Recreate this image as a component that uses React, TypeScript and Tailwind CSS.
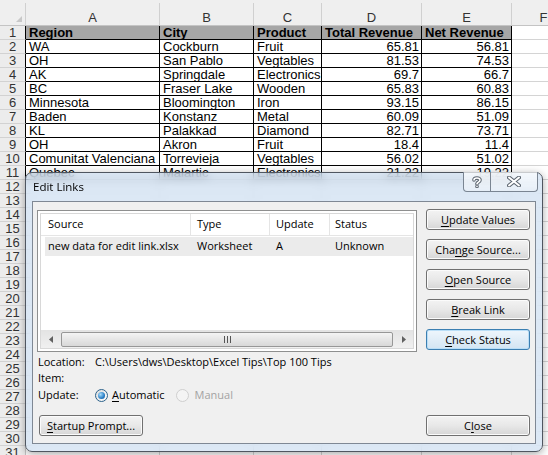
import React from 'react';

const cols = [
  { k: 'A', w: 'w-[134px]' },
  { k: 'B', w: 'w-[94px]' },
  { k: 'C', w: 'w-[68px]' },
  { k: 'D', w: 'w-[100px]' },
  { k: 'E', w: 'w-[90px]' },
  { k: 'F', w: 'w-[64px]' },
];

const data = [
  ['Region', 'City', 'Product', 'Total Revenue', 'Net Revenue'],
  ['WA', 'Cockburn', 'Fruit', '65.81', '56.81'],
  ['OH', 'San Pablo', 'Vegtables', '81.53', '74.53'],
  ['AK', 'Springdale', 'Electronics', '69.7', '66.7'],
  ['BC', 'Fraser Lake', 'Wooden', '65.83', '60.83'],
  ['Minnesota', 'Bloomington', 'Iron', '93.15', '86.15'],
  ['Baden', 'Konstanz', 'Metal', '60.09', '51.09'],
  ['KL', 'Palakkad', 'Diamond', '82.71', '73.71'],
  ['OH', 'Akron', 'Fruit', '18.4', '11.4'],
  ['Comunitat Valenciana', 'Torrevieja', 'Vegtables', '56.02', '51.02'],
  ['Quebec', 'Malartic', 'Electronics', '21.22', '19.22'],
];

function Sheet() {
  const rows = Array.from({ length: 31 }, (_, i) => i + 1);
  return (
    <div className="flex flex-col font-['Liberation_Sans',Arial,sans-serif] text-[13px] text-black">
      {/* Column headers */}
      <div className="flex h-[26px] border-b border-[#c4c4c4] bg-[#efefef] pt-[3px]">
        <div className="relative w-[26px] shrink-0 border-r border-[#d0d0d0]">
          <svg className="absolute bottom-[3px] right-[3px]" width="6" height="6" viewBox="0 0 6 6">
            <path d="M6 0 L6 6 L0 6 Z" fill="#c8c8c8" />
          </svg>
        </div>
        {cols.map((c) => (
          <div
            key={c.k}
            className={`${c.w} flex shrink-0 items-end justify-center border-r border-[#d0d0d0] leading-[14px] text-[#333]`}
          >
            {c.k}
          </div>
        ))}
      </div>
      {/* Rows */}
      {rows.map((r) => {
        const row = data[r - 1];
        return (
          <div key={r} className="flex h-[14px] leading-[13px]">
            <div
              className={`w-[26px] shrink-0 border-b border-[#d2d2d2] bg-[#ececec] text-center text-[#333] ${
                row ? 'border-r border-r-black' : 'border-r border-r-[#c4c4c4]'
              }`}
            >
              {r}
            </div>
            {cols.map((c, ci) => {
              const v = row && ci < 5 ? row[ci] : '';
              const inData = row && ci < 5;
              return (
                <div
                  key={c.k}
                  className={`${c.w} shrink-0 overflow-hidden whitespace-nowrap border-b border-r ${
                    inData ? 'border-black' : 'border-[#d4d4d4]'
                  } ${r === 1 && inData ? 'bg-[#a6a6a6] font-bold' : ''} ${
                    ci >= 3 && r > 1 ? 'pr-[2px] text-right' : 'pl-[3px]'
                  } ${ci >= 3 && r === 1 ? 'pl-[2px]' : ''}`}
                >
                  {v}
                </div>
              );
            })}
          </div>
        );
      })}
    </div>
  );
}

function WinButton({
  children,
  isDefault,
}: {
  children: React.ReactNode;
  isDefault?: boolean;
}) {
  return (
    <div
      className={`flex h-[21px] w-[104px] items-center justify-center rounded-[3px] border text-[11px] leading-none text-black ${
        isDefault
          ? 'border-[#3c7fb1] bg-linear-to-b from-[#eef6fc] to-[#d3e5f3] shadow-[inset_0_0_0_1px_#b9def7]'
          : 'border-[#707070] bg-linear-to-b from-[#f3f3f3] via-[#e8e8e8] to-[#d6d6d6] shadow-[inset_0_0_0_1px_#fbfbfb]'
      }`}
    >
      {children}
    </div>
  );
}

function U({ children }: { children: React.ReactNode }) {
  return <span className="underline underline-offset-[2px]">{children}</span>;
}

function ListBox() {
  return (
    <div className="flex h-[142px] w-[380px] flex-col border border-[#8e8f8f] bg-white p-[2px]">
      <div className="flex flex-1 flex-col border border-[#d8d8d8]">
        {/* header */}
        <div className="flex h-[22px] shrink-0 items-center border-b border-[#e5e5e5] text-[11px]">
          <div className="flex h-full w-[150px] items-center border-r border-[#e5e5e5] pl-[7px]">Source</div>
          <div className="flex h-full w-[79px] items-center border-r border-[#e5e5e5] pl-[6px]">Type</div>
          <div className="flex h-full w-[60px] items-center border-r border-[#e5e5e5] pl-[6px]">Update</div>
          <div className="flex h-full flex-1 items-center pl-[5px]">Status</div>
        </div>
        {/* row */}
        <div className="ml-[4px] mt-px flex h-[19px] items-center bg-[#ebebeb] text-[11px]">
          <div className="w-[146px] pl-[3px]">new data for edit link.xlsx</div>
          <div className="w-[79px] pl-[6px]">Worksheet</div>
          <div className="w-[60px] pl-[6px]">A</div>
          <div className="flex-1 pl-[5px]">Unknown</div>
        </div>
        <div className="flex-1" />
        {/* horizontal scrollbar */}
        <div className="flex h-[18px] shrink-0 items-center bg-linear-to-b from-[#e3e3e3] to-[#f0f0f0] px-[1px]">
          <div className="flex w-[17px] items-center justify-center">
            <svg width="4" height="7" viewBox="0 0 4 7">
              <path d="M4 0 L0 3.5 L4 7 Z" fill="#606060" />
            </svg>
          </div>
          <div className="ml-[2px] flex h-[15px] w-[332px] items-center justify-center rounded-[2px] border border-[#979797] bg-linear-to-b from-[#f4f4f4] to-[#d8d8d8]">
            <svg width="7" height="7" viewBox="0 0 7 7">
              <rect x="0" y="0" width="1" height="7" fill="#555" />
              <rect x="3" y="0" width="1" height="7" fill="#555" />
              <rect x="6" y="0" width="1" height="7" fill="#555" />
            </svg>
          </div>
          <div className="ml-auto flex w-[17px] items-center justify-center">
            <svg width="4" height="7" viewBox="0 0 4 7">
              <path d="M0 0 L4 3.5 L0 7 Z" fill="#606060" />
            </svg>
          </div>
        </div>
      </div>
    </div>
  );
}

function Dialog() {
  return (
    <div className="absolute left-[25px] top-[172px] flex h-[280px] w-[518px] flex-col rounded-[7px] border border-[#4f5660] bg-[#c6daf0]/60 shadow-[0_2px_8px_rgba(0,0,0,0.35)] backdrop-blur-[5px] font-['Open_Sans','Liberation_Sans',sans-serif]">
      {/* title bar */}
      <div className="flex h-[28px] shrink-0 items-center">
        <span className="pl-[7px] text-[11.5px] text-black">Edit Links</span>
        <div className="-mt-px ml-auto mr-[4px] flex h-[20px] self-start overflow-hidden rounded-b-[4px] border border-t-0 border-[#7a8592] bg-linear-to-b from-white/70 to-white/30">
          <div className="flex w-[27px] items-center justify-center border-r border-[#7a8592]">
            <svg width="10" height="12" viewBox="0 0 10 12">
              <path
                d="M2 4 C2 1.5 8 1.2 8 4 C8 6 5.5 6 5 7.8 M5 10.2 L5 10.4"
                fill="none"
                stroke="#5d6670"
                strokeWidth="3.6"
                strokeLinecap="round"
              />
              <path
                d="M2 4 C2 1.5 8 1.2 8 4 C8 6 5.5 6 5 7.8 M5 10.2 L5 10.4"
                fill="none"
                stroke="#ffffff"
                strokeWidth="1.6"
                strokeLinecap="round"
              />
            </svg>
          </div>
          <div className="flex w-[46px] items-center justify-center">
            <svg width="14" height="11" viewBox="0 0 14 11">
              <path d="M2 1.5 L12 9.5 M12 1.5 L2 9.5" stroke="#5d6670" strokeWidth="4" strokeLinecap="round" />
              <path d="M2 1.5 L12 9.5 M12 1.5 L2 9.5" stroke="#ffffff" strokeWidth="2" strokeLinecap="round" />
            </svg>
          </div>
        </div>
      </div>
      {/* client area */}
      <div className="mx-[6px] mb-[7px] flex flex-1 border border-[#7f8894] bg-[#f0f0f0] text-[11px] text-black">
        <div className="flex flex-1 flex-col pb-[7px] pl-[4px] pt-[8px]">
          <ListBox />
          <div className="mt-[2px] flex h-[16px] items-center pl-[1px]">
            <span className="w-[57px]">Location:</span>
            <span>C:\Users\dws\Desktop\Excel Tips\Top 100 Tips</span>
          </div>
          <div className="flex h-[16px] items-center pl-[1px]">
            <span>Item:</span>
          </div>
          <div className="flex h-[18px] items-center pl-[1px]">
            <span className="w-[57px]">Update:</span>
            <span className="flex h-[13px] w-[13px] items-center justify-center rounded-full border border-[#2c628b] bg-linear-to-br from-[#dcdcdc] to-[#ffffff]">
              <span className="h-[7px] w-[7px] rounded-full bg-[radial-gradient(circle_at_35%_35%,#a9ddfb,#2a7fc7_60%,#0f4f8a)]" />
            </span>
            <span className="ml-[4px]">
              <U>A</U>utomatic
            </span>
            <span className="ml-[11px] h-[13px] w-[13px] rounded-full border border-[#cfcfcf] bg-[#f4f4f4]" />
            <span className="ml-[6px] text-[#a3a3a3]">Manual</span>
          </div>
          <div className="mt-auto pl-[2px]">
            <WinButton>
              <span>
                <U>S</U>tartup Prompt...
              </span>
            </WinButton>
          </div>
        </div>
        <div className="mr-[5px] flex w-[104px] flex-col gap-[9px] pb-[7px] pt-[7px]">
          <WinButton>
            <span>
              <U>U</U>pdate Values
            </span>
          </WinButton>
          <WinButton>
            <span>
              Cha<U>n</U>ge Source...
            </span>
          </WinButton>
          <WinButton>
            <span>
              <U>O</U>pen Source
            </span>
          </WinButton>
          <WinButton>
            <span>
              <U>B</U>reak Link
            </span>
          </WinButton>
          <WinButton isDefault>
            <span>
              <U>C</U>heck Status
            </span>
          </WinButton>
          <div className="mt-auto">
            <WinButton>
              <span>
                C<U>l</U>ose
              </span>
            </WinButton>
          </div>
        </div>
      </div>
    </div>
  );
}

export default function App() {
  return (
    <div className="relative h-[455px] w-[548px] overflow-hidden bg-white">
      <Sheet />
      <Dialog />
    </div>
  );
}
